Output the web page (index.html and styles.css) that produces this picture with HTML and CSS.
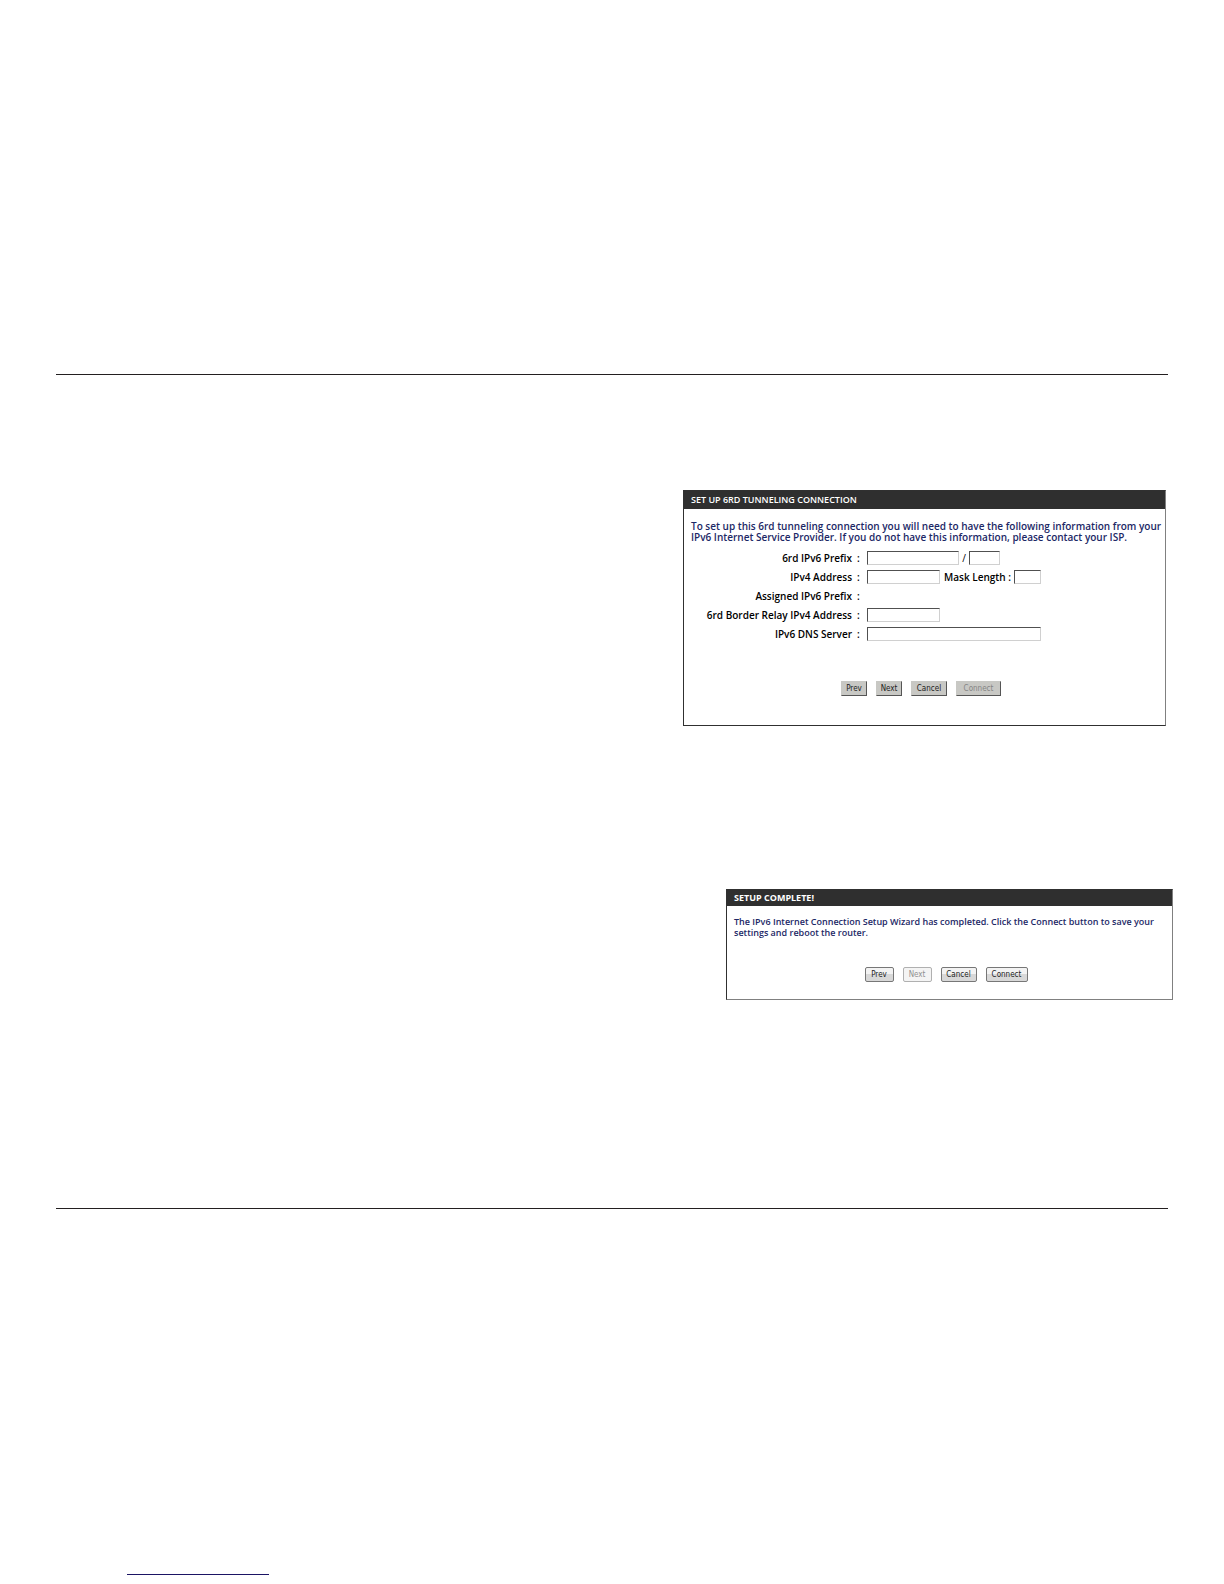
FILE: index.html
```html
<!DOCTYPE html>
<html lang="en">
<head>
    <meta charset="UTF-8">
    <meta name="viewport" content="width=device-width, initial-scale=1.0">
    <title>IPv6 Setup Wizard</title>
    <link rel="stylesheet" href="styles.css">
</head>
<body>
    <main>
        <form class="panel tunnel" action="#" method="post">
            <h2>SET UP 6RD TUNNELING CONNECTION</h2>
            <p>To set up this 6rd tunneling connection you will need to have the following information from your IPv6 Internet Service Provider. If you do not have this information, please contact your ISP.</p>

            <div class="fields">
                <div class="row">
                    <label class="name" for="prefix">6rd IPv6 Prefix</label><span class="colon">:</span>
                    <input type="text" class="medium" id="prefix" name="prefix">
                    <span class="slash">/</span>
                    <input type="text" class="short" name="prefix-length" aria-label="Prefix length">
                </div>
                <div class="row">
                    <label class="name" for="ipv4">IPv4 Address</label><span class="colon">:</span>
                    <input type="text" class="address" id="ipv4" name="ipv4">
                    <label class="mask" for="mask">Mask Length :</label>
                    <input type="text" class="tiny" id="mask" name="mask">
                </div>
                <div class="row">
                    <span class="name">Assigned IPv6 Prefix</span><span class="colon">:</span>
                </div>
                <div class="row">
                    <label class="name" for="relay">6rd Border Relay IPv4 Address</label><span class="colon">:</span>
                    <input type="text" class="address" id="relay" name="relay">
                </div>
                <div class="row">
                    <label class="name" for="dns">IPv6 DNS Server</label><span class="colon">:</span>
                    <input type="text" class="long" id="dns" name="dns">
                </div>
            </div>

            <div class="buttons">
                <button type="button">Prev</button>
                <button type="button">Next</button>
                <button type="button" class="wide">Cancel</button>
                <button type="submit" class="wider" disabled>Connect</button>
            </div>
        </form>

        <form class="panel complete" action="#" method="post">
            <h2>SETUP COMPLETE!</h2>
            <p>The IPv6 Internet Connection Setup Wizard has completed. Click the Connect button to save your settings and reboot the router.</p>

            <div class="buttons">
                <button type="button">Prev</button>
                <button type="button" disabled>Next</button>
                <button type="button" class="wide">Cancel</button>
                <button type="submit" class="wider">Connect</button>
            </div>
        </form>
    </main>

    <footer>
        <a class="footer-link" href="#" aria-label="Back to top"></a>
    </footer>
</body>
</html>
```
FILE: styles.css
```css
* {
    box-sizing: border-box;
}

body {
    margin: 0;
    padding: 374px 56px 8px;
    font-family: "Open Sans", "Noto Sans", sans-serif;
    background-color: #ffffff;
}

main {
    display: flex;
    flex-direction: column;
    align-items: flex-end;
    padding: 115px 0 208px;
    border-top: 1px solid #231f20;
    border-bottom: 1px solid #231f20;
}

.panel {
    width: 100%;
    border: 1px solid #303030;
    font-size: 9px;
    font-weight: 600;
}

.panel h2 {
    margin: 0;
    padding: 0 7px;
    background-color: #2f2f2f;
    color: #ffffff;
    font-size: 9px;
    font-weight: 600;
    line-height: 18px;
}

.panel p {
    margin: 0;
    padding: 0 0 0 7px;
    color: #1c2866;
    line-height: 11px;
}

.tunnel {
    max-width: 483px;
    margin-right: 2px;
    padding-bottom: 29px;
    border-right-color: #808080;
}

.tunnel p {
    padding-top: 12px;
    font-size: 10px;
}

.fields {
    padding-top: 5px;
}

.row {
    display: flex;
    align-items: center;
    height: 19px;
    color: #000000;
    font-size: 10px;
}

.name {
    width: 168px;
    text-align: right;
}

.colon {
    width: 15px;
    padding-left: 5px;
}

.row input {
    height: 14px;
    padding: 0 2px;
    border: 1px solid #d0d0d0;
    border-top-color: #505050;
    border-left-color: #505050;
    font: inherit;
}

.medium {
    width: 92px;
}

.slash {
    width: 10px;
    text-align: center;
    font-weight: normal;
}

.short {
    width: 31px;
}

.address {
    width: 73px;
}

.mask {
    width: 74px;
    padding-left: 4px;
}

.tiny {
    width: 27px;
}

.long {
    width: 174px;
}

.buttons {
    display: flex;
    justify-content: center;
    gap: 9px;
    padding-right: 7px;
}

.buttons button {
    width: 26px;
    height: 15px;
    padding: 0;
    font-family: "DejaVu Sans Condensed", sans-serif;
    font-size: 8px;
    line-height: 13px;
    color: #222222;
}

.tunnel .buttons {
    padding-top: 38px;
}

.tunnel button {
    border: 1px solid #c8c8c4;
    border-right-color: #555555;
    border-bottom-color: #555555;
    background-color: #c8c8c4;
}

.tunnel .buttons .wide,
.complete .buttons .wide {
    width: 36px;
}

.tunnel .buttons .wider {
    width: 45px;
}

.tunnel .buttons button:disabled {
    color: #858585;
}

.complete {
    max-width: 447px;
    margin: 163px -5px 0 0;
    padding-bottom: 17px;
    border-right-color: #808080;
    border-bottom-color: #808080;
}

.complete h2 {
    font-weight: bold;
    line-height: 16px;
}

.complete p {
    padding-top: 10px;
}

.complete .buttons {
    padding-top: 29px;
}

.complete .buttons button {
    width: 29px;
    border: 1px solid #777777;
    border-radius: 2px;
    background: linear-gradient(#f3f3f3 50%, #d8d8d8 50%);
}

.complete .buttons .wider {
    width: 42px;
}

.complete .buttons .wide {
    width: 36px;
}

.complete .buttons button:disabled {
    border-color: #b0b0b0;
    background: #f4f4f4;
    color: #909090;
}

footer {
    padding: 365px 71px 0;
}

.footer-link {
    display: block;
    width: 142px;
    border-bottom: 1px solid #1b1464;
}
```
